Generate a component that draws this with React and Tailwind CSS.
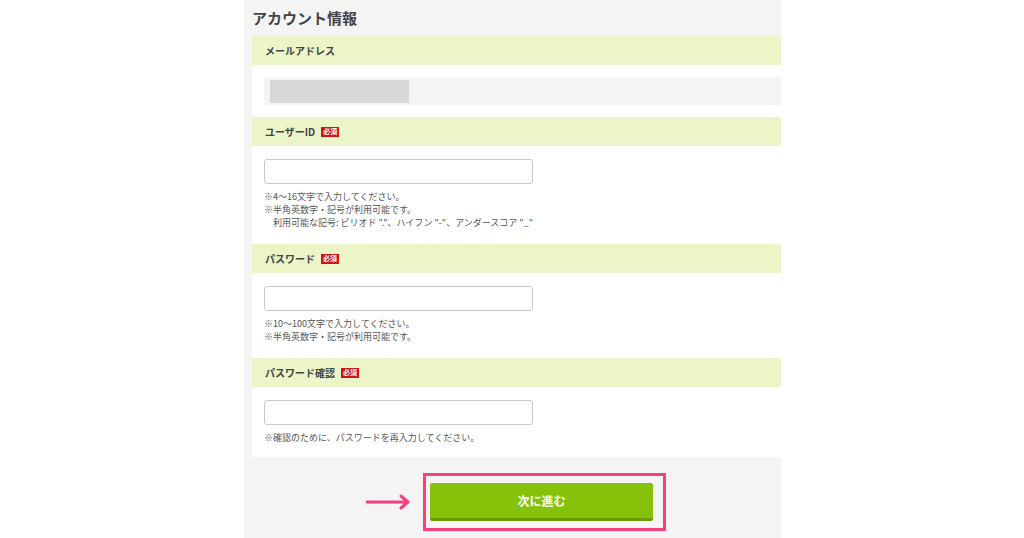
const font = { fontFamily: '"Noto Sans CJK JP", "Noto Sans", sans-serif' };

const Required = () => (
  <span className="ml-[6px] inline-flex h-[10px] w-[18px] items-center justify-center bg-[#d0121b] text-[7px] font-bold leading-none text-white">
    必須
  </span>
);

const Header = ({ label, required }) => (
  <div className="flex h-[29px] items-center bg-[#ecf5c8] pl-[13px] text-[10px] font-bold text-[#444]">
    <span>{label}</span>
    {required && <Required />}
  </div>
);

const Input = () => (
  <div className="h-[25px] w-[269px] rounded-[3px] border border-[#c9c9c9] bg-white" />
);

const Notes = ({ lines }) => (
  <div className="mt-[6px] text-[9px] leading-[13px] text-[#555]">
    {lines.map((l, i) => (
      <div key={i} className={l.indent ? 'pl-[9px]' : ''}>
        {l.text}
      </div>
    ))}
  </div>
);

const Field = ({ label, notes, last }) => (
  <>
    <Header label={label} required />
    <div className={`bg-white pl-[12px] pt-[13px] ${last ? 'pb-[13px]' : 'pb-[15px]'}`}>
      <Input />
      <Notes lines={notes} />
    </div>
  </>
);

export default function App() {
  return (
    <div className="h-[538px] w-[1024px] overflow-hidden bg-white" style={font}>
      <div className="ml-[244px] flex h-[538px] w-[537px] flex-col bg-[#f4f4f4]">
        {/* Title */}
        <div className="flex h-[36px] items-center pl-[8px] text-[15px] font-bold text-[#444]">
          アカウント情報
        </div>

        <div className="ml-[8px]">
          <Header label="メールアドレス" />
          <div className="bg-white pl-[12px] py-[12px]">
            <div className="flex h-[28px] items-center bg-[#f4f4f4] pl-[6px]">
              <div className="h-[23px] w-[139px] bg-[#d8d8d8]" />
            </div>
          </div>

          <Field
            label="ユーザーID"
            notes={[
              { text: '※4〜16文字で入力してください。' },
              { text: '※半角英数字・記号が利用可能です。' },
              { text: '利用可能な記号: ピリオド "."、ハイフン "-"、アンダースコア "_"', indent: true },
            ]}
          />
          <Field
            label="パスワード"
            notes={[
              { text: '※10〜100文字で入力してください。' },
              { text: '※半角英数字・記号が利用可能です。' },
            ]}
          />
          <Field
            label="パスワード確認"
            last
            notes={[{ text: '※確認のために、パスワードを再入力してください。' }]}
          />
        </div>

        {/* Next button */}
        <div className="mt-[16px] flex items-center pl-[122px]">
          <svg width="45" height="16" viewBox="0 0 45 16" className="mr-[12px]">
            <path d="M1 8 H42 M35 2 L42 8 L35 14" fill="none" stroke="#f7407d" strokeWidth="3" strokeLinecap="round" strokeLinejoin="round" />
          </svg>
          <div className="border-[3px] border-[#f7407d] pb-[7px] pl-[4px] pr-[10px] pt-[7px]">
            <button className="flex h-[38px] w-[223px] items-center justify-center rounded-[2px] border-b-[3px] border-[#6c9c07] bg-[#86c20a] text-[12px] font-bold text-white">
              次に進む
            </button>
          </div>
        </div>
      </div>
    </div>
  );
}
